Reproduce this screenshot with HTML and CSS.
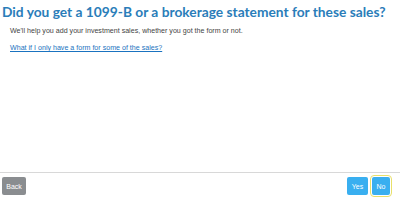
FILE: index.html
```html
<!DOCTYPE html>
<html>
<head><link rel="stylesheet" href="styles.css"></head>
<body>
<div class="page">
  <div class="content">
    <h1 class="title">Did you get a 1099-B or a brokerage statement for these sales?</h1>
    <p class="desc">We'll help you add your investment sales, whether you got the form or not.</p>
    <a class="link" href="#">What if I only have a form for some of the sales?</a>
  </div>
  <div class="footer">
    <button class="btn back">Back</button>
    <div class="right">
      <button class="btn primary">Yes</button>
      <button class="btn primary focus">No</button>
    </div>
  </div>
</div>
</body>
</html>
```
FILE: styles.css
```css
html, body { margin: 0; padding: 0; background: #fff; }
.page { width: 400px; height: 221px; display: flex; flex-direction: column; font-family: "Liberation Sans", Arial, sans-serif; }
.content { flex: 1; padding: 3px 0 0 2px; }
.title { margin: 0; font-family: "Lato", sans-serif; font-weight: 700; font-size: 13.75px; line-height: 17px; color: #2a7db9; white-space: nowrap; }
.desc { margin: 7px 0 0 8px; font-size: 7.1px; line-height: 9px; color: #444; }
.link { display: inline-block; margin: 8px 0 0 8px; font-size: 7.1px; line-height: 9px; color: #1a73c0; text-decoration: underline; }
.footer { height: 49px; border-top: 1px solid #d8d8d8; display: flex; justify-content: space-between; align-items: flex-start; padding: 4px 10px 0 2px; box-sizing: border-box; }
.right { display: flex; gap: 4px; }
.btn { border: none; border-radius: 2px; font-family: "Liberation Sans", Arial, sans-serif; font-size: 7px; color: #fff; height: 18px; padding: 0 4px; margin: 0; }
.back { background: #8a8d90; width: 24px; }
.primary { background: #39aff0; width: 21px; padding: 0; }
.focus { outline: 1px solid #e8e06a; outline-offset: 1px; width: 18px; }
```
